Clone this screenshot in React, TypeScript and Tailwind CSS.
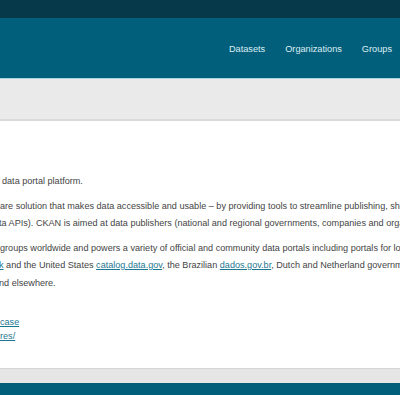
export default function App() {
  const font = { fontFamily: '"Liberation Sans", Arial, sans-serif' }
  return (
    <div className="w-[400px] h-[395px] overflow-hidden bg-white flex flex-col" style={font}>
      {/* account bar */}
      <div className="h-[18px] shrink-0 bg-[#063a4b]" />

      {/* masthead */}
      <header className="h-[61px] shrink-0 bg-[#025f7b] flex items-center justify-end pr-[8px] border-b border-[#a9d3df]">
        <nav className="flex items-center gap-[20px] text-[9.2px] text-[#dceef3] pt-[4px]">
          <a>Datasets</a>
          <a>Organizations</a>
          <a>Groups</a>
        </nav>
      </header>

      {/* toolbar band */}
      <div className="h-[42px] shrink-0 bg-[#eaeaea] border-b-2 border-[#d9d9d9]" />

      {/* content */}
      <main className="flex-1 overflow-hidden pt-[52px] text-[9.1px] leading-[17.5px] text-[#444] whitespace-nowrap">
        <p className="ml-[2px]">data portal platform.</p>
        <p className="mt-[7px]">
          are solution that makes data accessible and usable – by providing tools to streamline publishing, sharing,
          <br />
          <span className="-ml-[1px]">ta APIs). CKAN is aimed at data publishers (national and regional governments, companies and organizations)</span>
        </p>
        <p className="mt-[7px]">
          groups worldwide and powers a variety of official and community data portals including portals for local,
          <br />
          <a className="text-[#1d7792] underline -ml-[1px]">k</a> and the United States{' '}
          <a className="text-[#1d7792] underline">catalog.data.gov</a>, the Brazilian{' '}
          <a className="text-[#1d7792] underline">dados.gov.br</a>, Dutch and Netherland government portals,
          <br />
          <span className="-ml-[1px]">nd elsewhere.</span>
        </p>
        <p className="mt-[23px] leading-[14px]">
          <a className="text-[#1d7792] underline">case</a>
          <br />
          <a className="text-[#1d7792] underline">res/</a>
        </p>
      </main>

      {/* footer */}
      <div className="h-[15px] shrink-0 bg-[#e6e6e6] border-t border-[#d6d6d6]" />
      <footer className="h-[12px] shrink-0 bg-[#025f7b]" />
    </div>
  )
}
